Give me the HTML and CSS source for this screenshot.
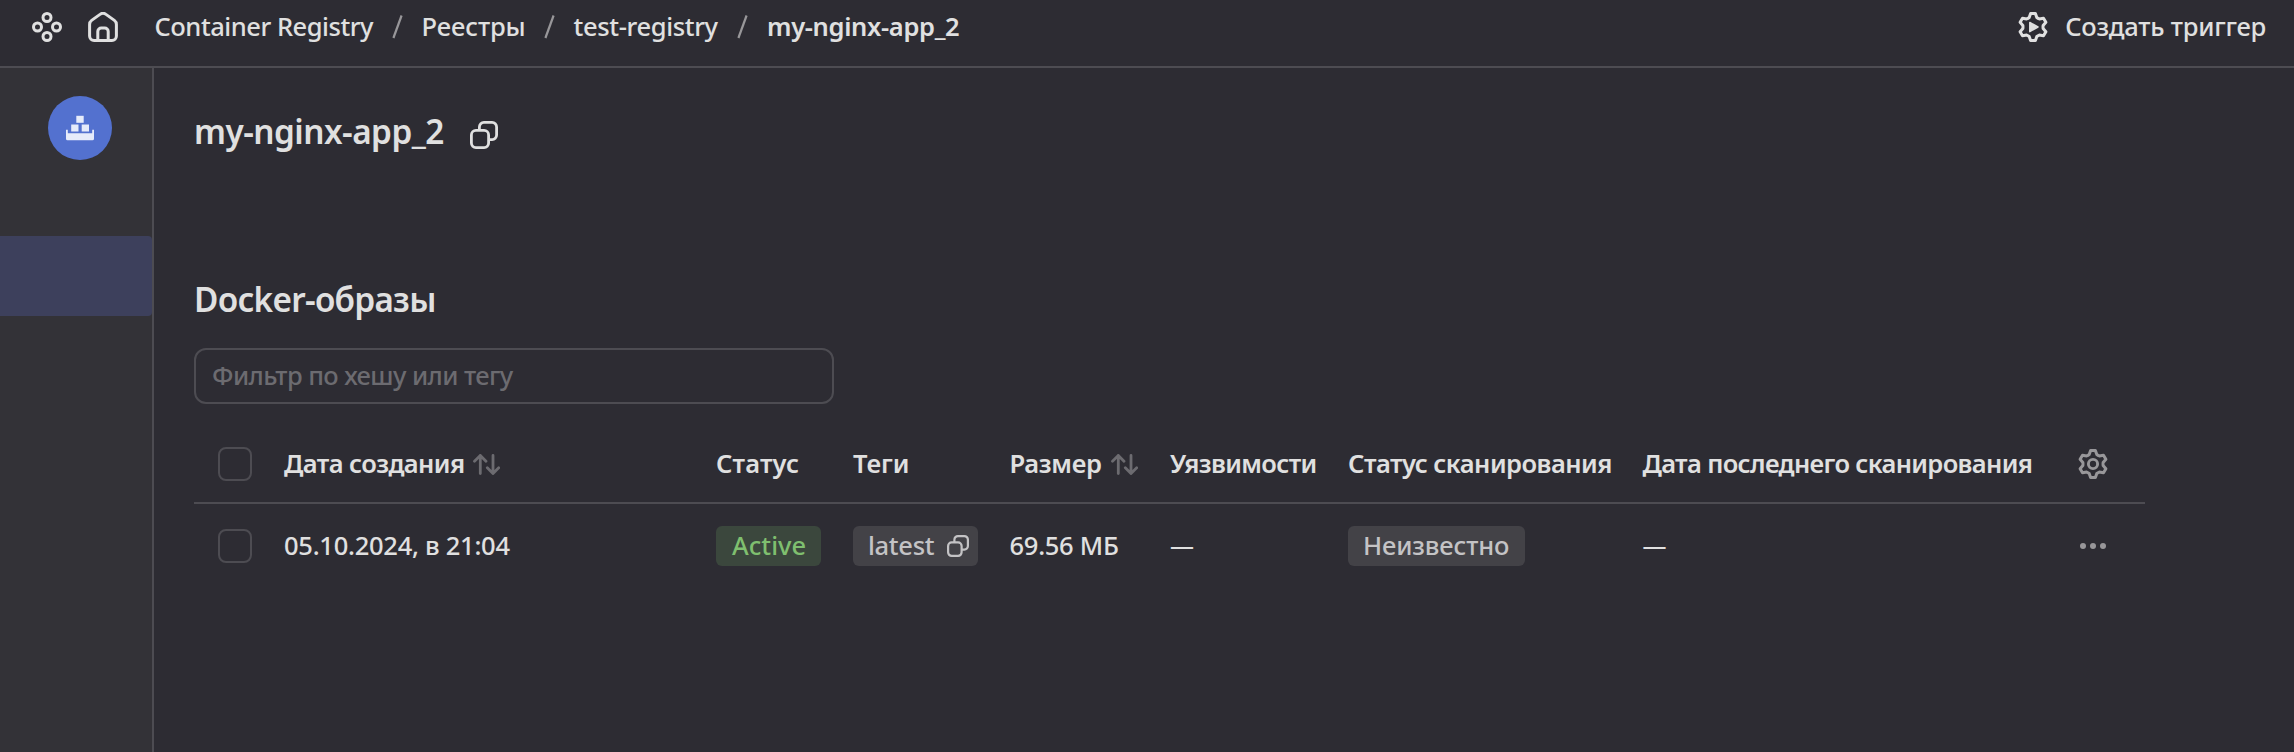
FILE: index.html
```html
<!DOCTYPE html>
<html lang="ru">
<head>
<meta charset="utf-8">
<title>my-nginx-app_2</title>
<link rel="stylesheet" href="styles.css">
</head>
<body>
<svg class="defs" width="0" height="0" aria-hidden="true">
  <symbol id="gear" viewBox="-15 -15 30 30">
    <path fill="none" stroke="currentColor" stroke-width="3" stroke-linejoin="round" d="M-3.8-9.5L-2.4-13.5H2.4L3.8-9.5Q5-8.6 6.33-8.04L10.49-8.83L12.89-4.67L10.13-1.46Q9.9 0 10.13 1.46L12.89 4.67L10.49 8.83L6.33 8.04Q5 8.6 3.8 9.5L2.4 13.5H-2.4L-3.8 9.5Q-5 8.6-6.33 8.04L-10.49 8.83L-12.89 4.67L-10.13 1.46Q-9.9 0-10.13-1.46L-12.89-4.67L-10.49-8.83L-6.33-8.04Q-5-8.6-3.8-9.5Z"/>
  </symbol>
  <symbol id="copy" viewBox="0 0 28 28">
    <g fill="none" stroke="currentColor" stroke-width="2.8">
      <rect x="1.4" y="9.4" width="17.2" height="17.2" rx="4.5"/>
      <path d="M9.4 9V5.9a4.5 4.5 0 0 1 4.5-4.5h8.2a4.5 4.5 0 0 1 4.5 4.5v8.2a4.5 4.5 0 0 1-4.5 4.5H19"/>
    </g>
  </symbol>
  <symbol id="sort" viewBox="0 0 27 21">
    <g fill="none" stroke="currentColor" stroke-width="2.8" stroke-linecap="round" stroke-linejoin="round">
      <path d="M7.3 19.5V1.5M1.5 7.2L7.3 1.4L13 7.2"/>
      <path d="M20 1.5V19.5M14.3 13.8L20 19.6L25.7 13.8"/>
    </g>
  </symbol>
</svg>
<header class="top">
  <svg class="icon-apps" viewBox="0 0 30 30" width="30" height="30">
    <g fill="none" stroke="currentColor" stroke-width="3">
      <circle cx="15" cy="5.5" r="4"/><circle cx="5.5" cy="15" r="4"/>
      <circle cx="24.5" cy="15" r="4"/><circle cx="15" cy="24.5" r="4"/>
    </g>
  </svg>
  <svg class="icon-home" viewBox="0 0 30 30" width="30" height="30">
    <g fill="none" stroke="currentColor" stroke-width="3" stroke-linejoin="round">
      <path d="M1.600 12.400a5 5 0 0 1 2-4L12 2.400a5 5 0 0 1 6 0l8.400 6a5 5 0 0 1 2 4V24a4.500 4.500 0 0 1-4.500 4.500H6.100A4.500 4.500 0 0 1 1.600 24Z"/>
      <path d="M9.800 28.500V19.500a3.500 3.500 0 0 1 3.500-3.500h3.400a3.500 3.500 0 0 1 3.500 3.500V28.500"/>
    </g>
  </svg>
  <nav class="crumbs">
    <span class="crumb crumb-service">Container Registry</span>
    <svg class="slash" viewBox="0 0 11 24" width="11" height="24"><path d="M1.400 23L9.600 0.500"/></svg>
    <span class="crumb crumb-list">Реестры</span>
    <svg class="slash" viewBox="0 0 11 24" width="11" height="24"><path d="M1.400 23L9.600 0.500"/></svg>
    <span class="crumb crumb-registry">test-registry</span>
    <svg class="slash" viewBox="0 0 11 24" width="11" height="24"><path d="M1.400 23L9.600 0.500"/></svg>
    <span class="crumb crumb-current">my-nginx-app_2</span>
  </nav>
  <div class="action">
    <span class="action-icon">
      <svg width="30" height="30" viewBox="-15 -15 30 30"><use href="#gear" x="-15" y="-15" width="30" height="30"/><path fill="currentColor" stroke="currentColor" stroke-width="1.500" stroke-linejoin="round" d="M-3.200-4.600L5 0L-3.200 4.600Z"/></svg>
    </span>
    <span class="action-text">Создать триггер</span>
  </div>
</header>
<div class="body">
  <aside class="side">
    <div class="logo">
      <svg viewBox="0 0 28 26" width="28" height="26">
        <g fill="#e6ebfa">
          <rect x="10.300" y="0.800" width="7.400" height="7"/>
          <rect x="5.200" y="9.500" width="7.300" height="7"/><rect x="15.700" y="9.500" width="7.300" height="7"/>
          <path d="M0 14.700H1.800V18.300H26.200V14.700H28V23.700a1.500 1.500 0 0 1-1.500 1.500H1.500A1.500 1.500 0 0 1 0 23.700Z"/>
        </g>
      </svg>
    </div>
    <div class="side-active"></div>
  </aside>
  <main class="main">
    <div class="title-row">
      <h1 class="title">my-nginx-app_2</h1>
      <svg class="icon-copy" width="28" height="28"><use href="#copy"/></svg>
    </div>
    <h2 class="subtitle">Docker-образы</h2>
    <div class="filter"><span class="placeholder">Фильтр по хешу или тегу</span></div>
    <div class="table">
      <div class="row row-head">
        <div class="cell cell-check"><span class="check"></span></div>
        <div class="cell"><span class="t-created">Дата создания</span><svg class="sort" width="27" height="21"><use href="#sort"/></svg></div>
        <div class="cell"><span class="t-status">Статус</span></div>
        <div class="cell"><span class="t-tags">Теги</span></div>
        <div class="cell"><span class="t-size">Размер</span><svg class="sort" width="27" height="21"><use href="#sort"/></svg></div>
        <div class="cell"><span class="t-vuln">Уязвимости</span></div>
        <div class="cell"><span class="t-scan">Статус сканирования</span></div>
        <div class="cell"><span class="t-last">Дата последнего сканирования</span></div>
        <div class="cell cell-icon"><svg width="30" height="30"><use href="#gear"/><circle cx="15" cy="15" r="4.600" fill="none" stroke="currentColor" stroke-width="2.900"/></svg></div>
      </div>
      <div class="row row-item">
        <div class="cell cell-check"><span class="check"></span></div>
        <div class="cell"><span class="v-date">05.10.2024, в 21:04</span></div>
        <div class="cell"><span class="badge badge-active"><span>Active</span></span></div>
        <div class="cell"><span class="badge badge-tag"><span>latest</span><svg width="22" height="22"><use href="#copy"/></svg></span></div>
        <div class="cell"><span class="v-size">69.56 МБ</span></div>
        <div class="cell"><span class="v-dash">—</span></div>
        <div class="cell"><span class="badge badge-unknown"><span>Неизвестно</span></span></div>
        <div class="cell"><span class="v-dash">—</span></div>
        <div class="cell cell-icon"><svg width="30" height="30" viewBox="0 0 30 30"><g fill="currentColor"><circle cx="5" cy="15" r="3"/><circle cx="15" cy="15" r="3"/><circle cx="25" cy="15" r="3"/></g></svg></div>
      </div>
    </div>
  </main>
</div>
</body>
</html>
```
FILE: styles.css
```css
* { box-sizing: border-box; }
body {
  margin: 0;
  height: 752px;
  overflow: hidden;
  display: flex;
  flex-direction: column;
  background: #2d2c33;
  color: #e0e0e0;
  font: 500 25.5px/36px "Noto Sans", sans-serif;
  white-space: nowrap;
}
svg { display: block; flex: none; }
.defs { position: absolute; }

.top {
  flex: none;
  display: flex;
  align-items: center;
  height: 68px;
  padding: 0 28px 12px 32px;
  border-bottom: 2px solid #4d4c52;
}
.icon-home { margin-left: 26px; }
.crumbs { display: flex; align-items: center; margin-left: 36.500px; }
.crumb { padding-bottom: 2px; }
.crumb-service { width: 237px; letter-spacing: -0.46px; }
.crumb-list { width: 122px; letter-spacing: -0.08px; }
.crumb-registry { width: 163.500px; letter-spacing: -0.35px; }
.crumb-current { font-weight: 600; letter-spacing: -0.33px; }
.slash { margin-right: 19px; fill: none; stroke: #98979a; stroke-width: 2.2; }
.action { display: flex; align-items: center; margin-left: auto; }
.action-icon { margin-right: 17px; }
.action-text { padding-bottom: 2px; letter-spacing: -0.22px; }

.body { flex: 1; display: flex; }
.side {
  flex: none;
  width: 154px;
  padding-top: 28px;
  background: #333237;
  border-right: 2px solid #4d4c52;
}
.logo {
  display: flex;
  align-items: center;
  justify-content: center;
  width: 64px;
  height: 64px;
  margin-left: 48px;
  border-radius: 50%;
  background: #5371cf;
}
.side-active {
  height: 80px;
  margin-top: 76px;
  border-radius: 0 4px 4px 0;
  background: #3d405c;
}

.main { padding: 43px 0 0 40px; }
.title-row { display: flex; align-items: center; height: 40px; }
.title, .subtitle { margin: 0; font-size: 33.3px; line-height: 40px; font-weight: 600; }
.title { width: 276px; letter-spacing: -0.53px; }
.icon-copy { margin-top: 8px; }
.subtitle { margin-top: 128px; letter-spacing: -0.7px; }
.filter {
  display: flex;
  align-items: center;
  width: 640px;
  height: 56px;
  margin-top: 29px;
  padding: 0 16px 2px;
  border: 2px solid #4d4c52;
  border-radius: 12px;
  color: #6c6b70;
}
.placeholder { letter-spacing: -0.58px; }

.table { width: 1951px; margin-top: 22px; }
.row {
  display: grid;
  grid-template-columns: 90px 432px 137px 156.500px 160.500px 178px 294.500px 435.500px 67px;
}
.row-head { height: 78px; border-bottom: 2px solid #4d4c52; font-weight: 600; }
.row-item { height: 84px; }
.cell { display: flex; align-items: center; }
.cell > span:not(.badge):not(.check) { padding-bottom: 2px; }
.cell-check { padding-left: 24px; }
.check { width: 34px; height: 34px; border: 2px solid #4d4c52; border-radius: 8px; }
.cell-icon { color: #98979a; }
.sort { margin-left: 9px; color: #6c6b70; }
.t-created { letter-spacing: -0.58px; }
.t-status { letter-spacing: 0.16px; }
.t-size { letter-spacing: -0.3px; }
.t-vuln { letter-spacing: -0.64px; }
.t-scan { letter-spacing: -0.5px; }
.t-last { letter-spacing: -0.64px; }
.v-date { letter-spacing: -0.26px; }
.v-size { letter-spacing: -0.27px; }
.v-dash { font-size: 24px; }
.badge {
  display: flex;
  align-items: center;
  height: 40px;
  padding: 0 15px;
  border-radius: 6px;
  background: #434247;
  color: #c4c3c5;
}
.badge > span { padding-bottom: 2px; }
.badge-active { width: 105px; padding-left: 16px; background: #3b473d; color: #7fbf6f; letter-spacing: 0.05px; }
.badge-tag { width: 125px; padding-right: 9px; justify-content: space-between; letter-spacing: -0.3px; }
.badge-unknown { width: 177px; letter-spacing: -0.12px; }
```
